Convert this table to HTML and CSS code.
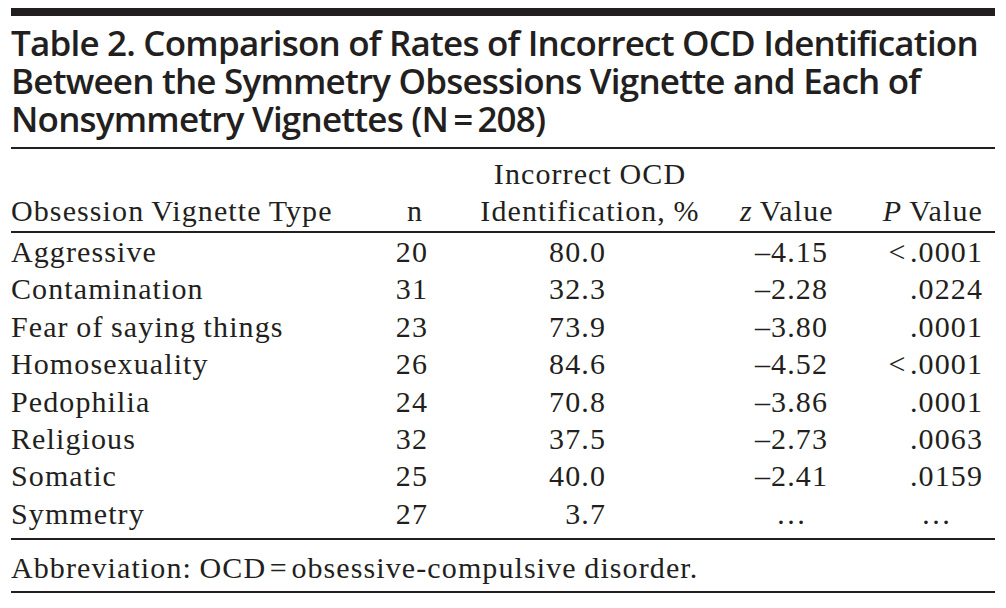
FILE: index.html
```html
<!DOCTYPE html>
<html>
<head>
<meta charset="utf-8">
<link rel="stylesheet" href="styles.css">
</head>
<body>
<div class="page">
  <div class="title">
    <div class="tline">Table 2. Comparison of Rates of Incorrect OCD Identification</div>
    <div class="tline">Between the Symmetry Obsessions Vignette and Each of</div>
    <div class="tline">Nonsymmetry Vignettes (N&#8201;=&#8201;208)</div>
  </div>
  <table class="data">
    <colgroup>
      <col class="c1"><col class="c2"><col class="c3"><col class="c4"><col class="c5">
    </colgroup>
    <thead>
      <tr>
        <th class="h1">Obsession Vignette Type</th>
        <th class="h2">n</th>
        <th class="h3">Incorrect OCD<br>Identification, %</th>
        <th class="h4"><i>z</i> Value</th>
        <th class="h5"><i>P</i> Value</th>
      </tr>
    </thead>
    <tbody>
      <tr><td class="d1">Aggressive</td><td class="d2">20</td><td class="d3">80.0</td><td class="d4">&#8211;4.15</td><td class="d5">&lt;&#8202;.0001</td></tr>
      <tr><td class="d1">Contamination</td><td class="d2">31</td><td class="d3">32.3</td><td class="d4">&#8211;2.28</td><td class="d5">.0224</td></tr>
      <tr><td class="d1">Fear of saying things</td><td class="d2">23</td><td class="d3">73.9</td><td class="d4">&#8211;3.80</td><td class="d5">.0001</td></tr>
      <tr><td class="d1">Homosexuality</td><td class="d2">26</td><td class="d3">84.6</td><td class="d4">&#8211;4.52</td><td class="d5">&lt;&#8202;.0001</td></tr>
      <tr><td class="d1">Pedophilia</td><td class="d2">24</td><td class="d3">70.8</td><td class="d4">&#8211;3.86</td><td class="d5">.0001</td></tr>
      <tr><td class="d1">Religious</td><td class="d2">32</td><td class="d3">37.5</td><td class="d4">&#8211;2.73</td><td class="d5">.0063</td></tr>
      <tr><td class="d1">Somatic</td><td class="d2">25</td><td class="d3">40.0</td><td class="d4">&#8211;2.41</td><td class="d5">.0159</td></tr>
      <tr class="last"><td class="d1">Symmetry</td><td class="d2">27</td><td class="d3">3.7</td><td class="d4 ell">&#8230;</td><td class="d5 ell">&#8230;</td></tr>
    </tbody>
  </table>
  <div class="foot">Abbreviation: OCD&#8202;=&#8202;obsessive-compulsive disorder.</div>
</div>
</body>
</html>
```
FILE: styles.css
```css
html, body {
  margin: 0;
  padding: 0;
  background: #ffffff;
}
.page {
  padding: 8px 11px 0 11px;
  width: 984px;
  color: #231f20;
}
.title {
  border-top: 8px solid #231f20;
  border-bottom: 2px solid #231f20;
  padding: 8px 0 9px 0;
  font-family: "Open Sans", "Noto Sans", sans-serif;
  font-weight: 600;
  font-size: 35px;
  line-height: 38px;
  letter-spacing: -0.8px;
}
.tline {
  white-space: nowrap;
}
.data {
  width: 984px;
  table-layout: fixed;
  border-collapse: collapse;
  font-family: "Liberation Serif", "Times New Roman", serif;
  font-size: 30px;
  letter-spacing: 1.1px;
  word-spacing: -1px;
  line-height: 37px;
}
.c1 { width: 369px; }
.c2 { width: 60px; }
.c3 { width: 300px; }
.c4 { width: 110px; }
.c5 { width: 145px; }
.data th {
  font-weight: normal;
  vertical-align: bottom;
  padding: 6px 0 2px 0;
  border-bottom: 2px solid #231f20;
  white-space: nowrap;
}
.h1 { text-align: left; }
.h2 { text-align: right; padding-right: 17px !important; }
.h3 { text-align: center; }
.h4 { text-align: right; padding-right: 22px !important; }
.h5 { text-align: right; padding-right: 12px !important; }
.data td {
  padding: 0;
  line-height: 37.4px;
  white-space: nowrap;
}
.d1 { text-align: left; }
.d2 { text-align: right; padding-right: 12px !important; }
.d3 { text-align: right; padding-right: 134px !important; }
.d4 { text-align: right; padding-right: 22px !important; }
.d5 { text-align: right; padding-right: 12px !important; }
.d4.ell, .d5.ell { padding-right: 43px !important; }
.data tr.last td {
  padding-bottom: 6px;
  border-bottom: 2px solid #231f20;
}
.foot {
  font-family: "Liberation Serif", "Times New Roman", serif;
  font-size: 30px;
  letter-spacing: 1.1px;
  word-spacing: -1px;
  line-height: 37px;
  padding: 9px 0 5px 0;
  border-bottom: 2px solid #231f20;
}
```
